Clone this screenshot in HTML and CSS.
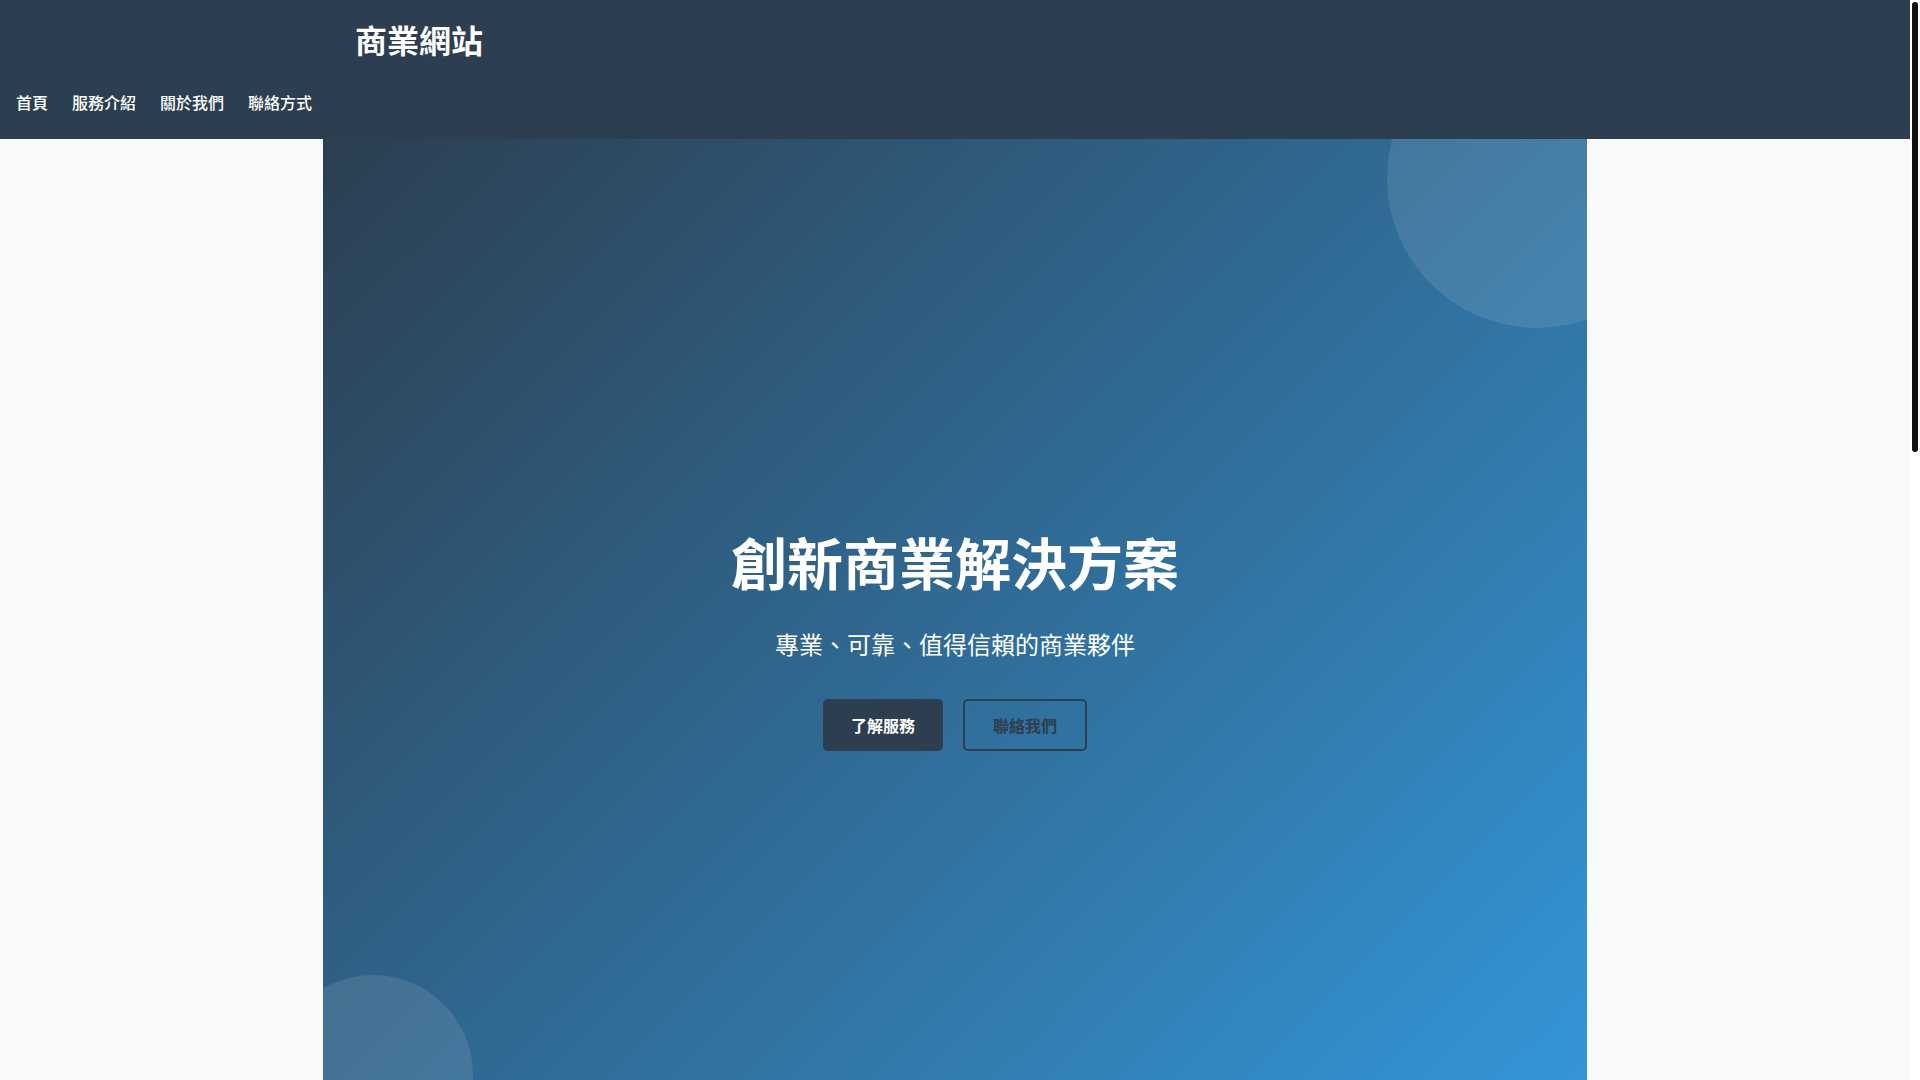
FILE: index.html
```html
<!DOCTYPE html>
<html lang="zh-Hant">
<head>
<meta charset="UTF-8">
<title>商業網站</title>
<link rel="stylesheet" href="styles.css">
</head>
<body>
<header class="site-header">
  <div class="container">
    <h1 class="logo">商業網站</h1>
  </div>
  <nav class="main-nav">
    <ul class="nav-list">
      <li><a href="#home">首頁</a></li>
      <li><a href="#services">服務介紹</a></li>
      <li><a href="#about">關於我們</a></li>
      <li><a href="#contact">聯絡方式</a></li>
    </ul>
  </nav>
</header>
<main>
  <section class="hero" id="home">
    <div class="hero-content">
      <h2 class="hero-title">創新商業解決方案</h2>
      <p class="hero-subtitle">專業、可靠、值得信賴的商業夥伴</p>
      <div class="hero-actions">
        <a class="btn btn-primary" href="#services">了解服務</a>
        <a class="btn btn-outline" href="#contact">聯絡我們</a>
      </div>
    </div>
  </section>
</main>
<div class="scroll-track" aria-hidden="true"><div class="scroll-thumb"></div></div>
</body>
</html>
```
FILE: styles.css
```css
* {
  box-sizing: border-box;
}

html, body {
  margin: 0;
  padding: 0;
}

html {
  overflow: hidden;
}

body {
  background: #f8f9fa;
  color: #333;
  font-family: "Noto Sans CJK TC", "Noto Sans", sans-serif;
  line-height: 1.5;
  padding-right: 10px;
}

a {
  text-decoration: none;
}

.scroll-track {
  position: fixed;
  top: 0;
  right: 0;
  width: 10px;
  height: 100vh;
  background: #ffffff;
  z-index: 10;
}

.scroll-thumb {
  margin: 2px 0 0 2px;
  width: 6px;
  height: 450px;
  border-radius: 3px;
  background: #111111;
}

.site-header {
  background: #2c3e50;
  color: #fff;
  padding: 20px 0 0;
  height: 139px;
}

.container {
  max-width: 1264px;
  margin: 0 auto;
  padding: 0 32px;
}

.logo {
  margin: 0;
  font-size: 32px;
  line-height: 38px;
  font-weight: 700;
}

.main-nav {
  margin-top: 32px;
}

.nav-list {
  list-style: none;
  margin: 0;
  padding: 0 16px;
  display: flex;
  gap: 24px;
}

.nav-list a {
  color: #fff;
  font-size: 16px;
  line-height: 24px;
  font-weight: 500;
  display: block;
}

.hero {
  position: relative;
  overflow: hidden;
  max-width: 1264px;
  margin: 0 auto;
  height: 1000px;
  background: linear-gradient(135deg, #2c3e50 0%, #3498db 100%);
  display: flex;
  align-items: center;
  justify-content: center;
  text-align: center;
  color: #fff;
}

.hero::before {
  content: "";
  position: absolute;
  width: 300px;
  height: 300px;
  border-radius: 50%;
  background: rgba(255, 255, 255, 0.1);
  top: -111px;
  right: -100px;
}

.hero::after {
  content: "";
  position: absolute;
  width: 200px;
  height: 200px;
  border-radius: 50%;
  background: rgba(255, 255, 255, 0.1);
  bottom: -36px;
  left: -50px;
}

.hero-content {
  position: relative;
  z-index: 1;
}

.hero-title {
  margin: 0 0 31px;
  font-size: 56px;
  line-height: 1.2;
  font-weight: 700;
}

.hero-subtitle {
  margin: 0 0 37px;
  font-size: 24px;
  line-height: 36px;
  font-weight: 400;
}

.hero-actions {
  display: flex;
  justify-content: center;
  gap: 20px;
}

.btn {
  display: inline-block;
  font-size: 16px;
  line-height: 24px;
  font-weight: 600;
  border-radius: 5px;
}

.btn-primary {
  background: #2c3e50;
  color: #fff;
  padding: 14px 28px;
}

.btn-outline {
  background: transparent;
  color: #2c3e50;
  border: 2px solid #2c3e50;
  padding: 12px 28px;
}
```
